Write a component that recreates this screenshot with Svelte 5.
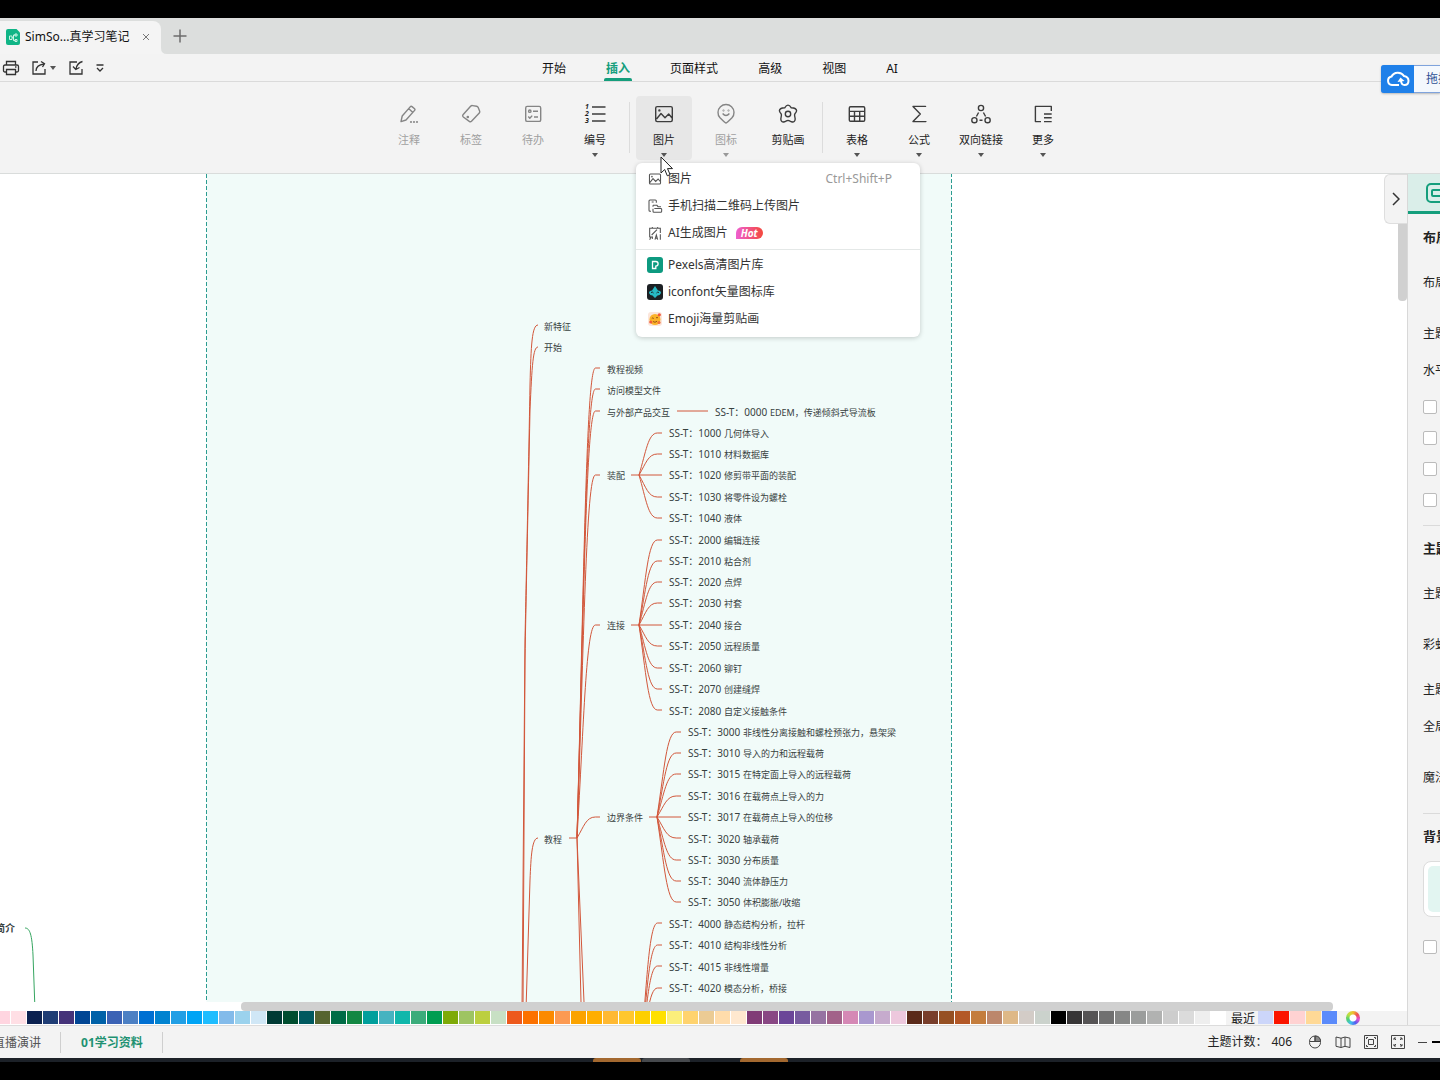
<script>
  const menus = ['开始', '插入', '页面样式', '高级', '视图', 'AI'];

  const dot = (x, y, r) => `M${x - r} ${y}a${r} ${r} 0 1 0 ${2 * r} 0a${r} ${r} 0 1 0 ${-2 * r} 0`;

  const pictureIcon = `M5.2 4.6h13.6q1.5 0 1.5 1.5v12q0 1.5 -1.5 1.5H5.2q-1.5 0 -1.5 -1.5v-12q0 -1.5 1.5 -1.5z M4.5 17L9 11.5l4 4.2 3.7 -3.7 3.8 4.5 ${dot(7.4, 8.4, 0.5)}`;

  const ribbon = [
    { label: '注释', off: true, d: `M4 19.6l1.2 -5.6L13.4 4.6q.8 -.7 1.6 0l2.6 2.2q.8 .8 0 1.6L9 18zM11.6 6.6l4 3.6 ${dot(14, 20, 0.4)} ${dot(17, 20, 0.4)} ${dot(20, 20, 0.4)}` },
    { label: '标签', off: true, d: `M11.6 4.2q.8 -.8 2 -.6l4 .6q1 .2 1.5 1.1l1.600 4q.3 1 -.4 1.800l-7.800 8.200q-1 .9 -2.200 .1l-6 -4.400q-1.200 -1 -.3 -2.300z ${dot(8.8, 15, 0.6)}` },
    { label: '待办', off: true, d: `M6.2 4.4h12q1.5 0 1.5 1.5v12q0 1.5 -1.5 1.5h-12q-1.5 0 -1.5 -1.5v-12q0 -1.5 1.5 -1.5z ${dot(8.8, 9.2, 1.2)} M12 9.2h5 M7.3 14.6l1.5 1.6 2.4 -2.6M13 15h4` },
    { label: '编号', arrow: true, digits: true, d: 'M9 5h13.5M9 12h13.5M9 19h13.5' },
    { divider: true },
    { label: '图片', arrow: true, active: true, d: pictureIcon },
    { label: '图标', off: true, arrow: true, d: `M12 21q-1 -.2 -6 -5.2A8 8 0 1 1 18 15.800q-5 5 -6 5.200z M8.600 11.500q3.400 4 6.800 0 ${dot(9.5, 8.5, 0.3)} ${dot(14.5, 8.5, 0.3)}` },
    { label: '剪贴画', d: `M15.300 5.800Q20.500 6 20.600 8.800Q20.500 10 18.900 11.800Q18.300 12.800 18.700 14L19.200 17Q19 20.700 15.500 19.800L13 18.700Q12 18.300 11 18.700L8.500 19.800Q5 20.700 4.800 17L5.300 14Q5.700 12.800 5.100 11.800Q3.500 10 3.400 8.800Q3.500 6 8.700 5.800Q12 .4 15.300 5.800z ${dot(12, 12, 2.7)}` },
    { divider: true },
    { label: '表格', arrow: true, d: 'M5.500 4.700h13q1.200 0 1.200 1.200v12.200q0 1.200 -1.200 1.200h-13q-1.200 0 -1.200 -1.200v-12.200q0 -1.200 1.200 -1.200zM4.300 9.400h15.400M4.300 14.300h15.400M9.500 9.400v9.900M14.700 9.400v9.900' },
    { label: '公式', arrow: true, d: 'M18.500 5V4.400H6l7.300 7.600L6 19.600h12.800v-.6' },
    { label: '双向链接', arrow: true, d: `${dot(12, 6, 2.6)} ${dot(5.4, 18.2, 2.6)} ${dot(18.6, 18.2, 2.6)} M9.600 10.500l-2.200 4M14.400 10.500l2.200 4M10.500 18.200h3` },
    { label: '更多', arrow: true, d: 'M20.300 9V4.400H4.400v15.200H10M13 12h7.700M13 15.800h7.700M13 19.600h7.700' }
  ];

  const topics = [
    { x: 544, y: 327, text: '新特征' },
    { x: 544, y: 348, text: '开始' },
    { x: 544, y: 840, text: '教程' },
    { x: 607, y: 370, text: '教程视频' },
    { x: 607, y: 391, text: '访问模型文件' },
    { x: 607, y: 413, text: '与外部产品交互' },
    { x: 607, y: 476, text: '装配' },
    { x: 607, y: 626, text: '连接' },
    { x: 607, y: 818, text: '边界条件' }
  ];

  const leaves = [
    { x: 715, y: 413, code: '0000', text: 'EDEM，传递倾斜式导流板' },
    { x: 669, y: 434, code: '1000', text: '几何体导入' },
    { x: 669, y: 455, code: '1010', text: '材料数据库' },
    { x: 669, y: 476, code: '1020', text: '修剪带平面的装配' },
    { x: 669, y: 498, code: '1030', text: '将零件设为螺栓' },
    { x: 669, y: 519, code: '1040', text: '液体' },
    { x: 669, y: 541, code: '2000', text: '编辑连接' },
    { x: 669, y: 562, code: '2010', text: '粘合剂' },
    { x: 669, y: 583, code: '2020', text: '点焊' },
    { x: 669, y: 604, code: '2030', text: '衬套' },
    { x: 669, y: 626, code: '2040', text: '接合' },
    { x: 669, y: 647, code: '2050', text: '远程质量' },
    { x: 669, y: 669, code: '2060', text: '铆钉' },
    { x: 669, y: 690, code: '2070', text: '创建缝焊' },
    { x: 669, y: 712, code: '2080', text: '自定义接触条件' },
    { x: 688, y: 733, code: '3000', text: '非线性分离接触和螺栓预张力，悬架梁' },
    { x: 688, y: 754, code: '3010', text: '导入的力和远程载荷' },
    { x: 688, y: 775, code: '3015', text: '在特定面上导入的远程载荷' },
    { x: 688, y: 797, code: '3016', text: '在载荷点上导入的力' },
    { x: 688, y: 818, code: '3017', text: '在载荷点上导入的位移' },
    { x: 688, y: 840, code: '3020', text: '轴承载荷' },
    { x: 688, y: 861, code: '3030', text: '分布质量' },
    { x: 688, y: 882, code: '3040', text: '流体静压力' },
    { x: 688, y: 903, code: '3050', text: '体积膨胀/收缩' },
    { x: 669, y: 925, code: '4000', text: '静态结构分析，拉杆' },
    { x: 669, y: 946, code: '4010', text: '结构非线性分析' },
    { x: 669, y: 968, code: '4015', text: '非线性增量' },
    { x: 669, y: 989, code: '4020', text: '模态分析，桥接' }
  ];

  // One curve per child: leaves the parent steeply, then bends flat into the label.
  function branch(ox, oy, tx, ty) {
    const w = tx - ox;
    const dy = ty - oy;
    if (dy === 0) return `M${ox} ${oy}H${tx}`;
    return `M${ox} ${oy}C${ox + w * 0.3} ${oy + dy * 0.55} ${ox + w * 0.4} ${ty} ${ox + w * 0.8} ${ty}H${tx}`;
  }

  const fan = (ox, oy, tx, ys) => ys.map((y) => branch(ox, oy, tx, y));

  const lines = [
    ...fan(577, 838, 600, [368, 389, 411, 475, 625, 817]),
    ...fan(639, 475, 662, [433, 454, 475, 497, 518]),
    ...fan(639, 625, 662, [540, 561, 582, 603, 625, 646, 668, 689, 710]),
    ...fan(657, 817, 681, [732, 753, 774, 796, 817, 838, 860, 881, 902]),
    ...fan(640, 1064, 662, [923, 945, 966, 988]),
    'M569 838H577L584 1002',
    'M577 838L581 1002',
    'M631 475H639',
    'M631 625H639',
    'M649 817H657',
    'M677 411H708',
    'M538 325C532 325 531 345 530 385C528 500 526 590 525 640L522 1010',
    'M538 347C533 347 532 365 530 410C528 510 526 600 525 660L523 1010',
    'M538 838C532 838 531 856 530 880L526 1010'
  ];

  const swatches = (
    'ffd5e0 ffdfe5 0b2150 1f3d75 453379 014694 0061a8 3b62b5 4c80c4 0070d2 0183d0 219fe5 00a4f5 1fbdff 83bbea 9bd2ed d0e7f6 ' +
    '003a34 004d2f 00595f 56642f 006c46 138743 009f9c 46b3c0 10b7ab 3bac7b 009d51 7eaa07 9ec462 bccf3f c8e0c4 ' +
    'ed591c fc7100 fb8a00 fc9a52 fba300 ffae00 ffb932 ffc72d fdcf00 ffe000 fbee7b ffd36e ebcb94 ffdcab ffe8cf ' +
    '803b76 894784 6b4698 775b9f 9672a2 a26289 d588b5 a998cf c6abcd edc8dd ' +
    '5a2a19 793e2b 965023 b35827 c47d3d bc876c deb887 d3ccc7 cbd2cc ' +
    '000000 373536 565455 707070 868786 9b9d9c b1b2b1 cdcdcd dbdbdb eeeeee ffffff'
  ).split(' ');
  const recent = ['ccd6fa', 'fb1500', 'ffd2d2', 'ffd996', '5b8bfb'];
</script>

<div class="screen">
  <div class="letterbox"></div>

  <header class="tabstrip">
    <div class="doc-tab">
      <svg class="doc-icon" width="14" height="16" viewBox="0 0 14 16" aria-hidden="true">
        <path d="M2 0h8.500L14 3.500V14q0 2 -2 2H2Q0 16 0 14V2Q0 0 2 0z" fill="#10b586" />
        <path d="M3.500 7h2.500v3.500H3.500zM6 8.700h1.500M9.500 6H7.500v5.500h2M9 5h2v2H9zM9 10.500h2v2H9z" fill="none" stroke="#c8f5e4" stroke-width="1" />
      </svg>
      <span>SimSo...真学习笔记</span>
      <button class="close" aria-label="关闭标签">
        <svg width="8" height="8" viewBox="0 0 8 8"><path d="M1 1l6 6M7 1L1 7" fill="none" stroke="#777" /></svg>
      </button>
      <svg class="flare" width="6" height="6" viewBox="0 0 6 6" aria-hidden="true"><path d="M0 0Q0 6 6 6H0z" fill="#f4f4f4" /></svg>
    </div>
    <button class="new-tab" aria-label="新建标签">
      <svg width="14" height="14" viewBox="0 0 14 14"><path d="M7 .5v13M.5 7h13" fill="none" stroke="#6c6c6c" stroke-width="1.500" /></svg>
    </button>
  </header>

  <nav class="menubar">
    <div class="quick">
      <button aria-label="打印">
        <svg width="18" height="16" viewBox="0 0 18 16"><path d="M4.500 5V1.500h9V5M4.500 12H3q-1.500 0 -1.500 -1.500v-4Q1.500 5 3 5h12q1.500 0 1.500 1.500v4q0 1.500 -1.500 1.500h-1.500M4.500 9.500h9v5h-9zM13 7h1.500" /></svg>
      </button>
      <button class="export" aria-label="导出">
        <svg width="16" height="16" viewBox="0 0 16 16"><path d="M7 2H2v12h12V9M5 11q0 -6 8 -7M10 1.500l3.500 2.300L11.500 7" /></svg>
        <i class="caret"></i>
      </button>
      <button class="import" aria-label="导入">
        <svg width="16" height="16" viewBox="0 0 16 16"><path d="M9 2H2v12h12V9M14.500 1.500Q9 3 8 9M5 6.500L7.800 9.500 11.500 7.500" /></svg>
      </button>
      <button class="more" aria-label="自定义工具栏">
        <svg width="8" height="8" viewBox="0 0 8 8"><path d="M.5 1h7M1 4l3 3 3 -3" /></svg>
      </button>
    </div>
    <ul class="menus">
      {#each menus as menu}
        <li><button class:current={menu === '插入'}>{menu}</button></li>
      {/each}
    </ul>
    <div></div>
    <button class="upload">
      <span class="cloud">
        <svg width="24" height="18" viewBox="0 0 24 18" aria-hidden="true">
          <path d="M13 15H6a4.300 4.300 0 0 1 -.5 -8.500A7 6.500 0 0 1 18 6q4.500 .8 4.500 4.800 0 4.200 -4 4.200 -3 0 -3.500 -4" fill="none" stroke="#fff" stroke-width="2" />
          <path d="M11.500 12l3 -4.500 4 3.500z" fill="#fff" />
        </svg>
      </span>
      <span class="upload-text">拖拽上传</span>
    </button>
  </nav>

  <section class="ribbon">
    {#each ribbon as item}
      {#if item.divider}
        <span class="divider"></span>
      {:else}
        <div class="slot">
          <button class="tool" class:off={item.off} class:active={item.active}>
            <svg width="24" height="24" viewBox="0 0 24 24" aria-hidden="true">
              <path d={item.d} />
              {#if item.digits}
                <text x="2" y="7">1</text><text x="2" y="14">2</text><text x="2" y="21">3</text>
              {/if}
            </svg>
            <span>{item.label}</span>
            {#if item.arrow}<i class="caret"></i>{/if}
          </button>
          {#if item.active}
            <div class="popup">
              <button>
                <svg class="line" width="16" height="16" viewBox="0 0 24 24"><path d={pictureIcon} /></svg>
                图片<kbd>Ctrl+Shift+P</kbd>
              </button>
              <button>
                <svg class="line" width="16" height="16" viewBox="0 0 24 24"><path d="M6 20H4.500q-1.500 0 -1.500 -1.500v-14Q3 3 4.500 3h8Q14 3 14 4.500V7M7 6h3M9 11h6l1.500 2H21M9 11v2M9 16v4q0 1.500 1.500 1.500h10Q22 21.500 22 20v-3q0 -1.200 -1.500 -1.200H11" /></svg>
                手机扫描二维码上传图片
              </button>
              <button>
                <svg class="line" width="16" height="16" viewBox="0 0 24 24"><path d="M9 18H4V5h16v7M8 5V3M16 5V3M7 15L15 7M6 18l-2 4M8 18v3M12 22l2 -7 2 7M13 20h2M20 14v8" /></svg>
                AI生成图片<em>Hot</em>
              </button>
              <hr />
              <button>
                <svg width="16" height="16" viewBox="0 0 16 16"><rect width="16" height="16" rx="3" fill="#0d9a80" /><path d="M5.500 4.500h3.300a2.300 2.300 0 0 1 0 4.600V11.500H5.500z" fill="none" stroke="#fff" stroke-width="1.300" /></svg>
                Pexels高清图片库
              </button>
              <button>
                <svg width="16" height="16" viewBox="0 0 16 16"><rect width="16" height="16" rx="3" fill="#1c2024" /><path d="M8 2l3 4.500q3 0 3 2.500 -1 2.500 -3.500 2.500L8 14l-2.500 -2.500Q3 11.500 2 9q0 -2.500 3 -2.500z" fill="#27b9c4" /><path d="M4 8.500q1.500 -1 2.500 .5M9.500 9q1 -1.500 2.500 -.5" fill="none" stroke="#1c2024" /></svg>
                iconfont矢量图标库
              </button>
              <button>
                <svg width="16" height="16" viewBox="0 0 16 16"><rect x="1" y="1" width="14" height="14" rx="3" fill="#fbe6dc" /><circle cx="8" cy="8.500" r="5.500" fill="#fbb328" /><path d="M4.800 7.500q1 -1.300 2 0M9 7q1 -1.300 2 0M6 10.500q2 1.800 4 -.3" fill="none" stroke="#7b3a12" stroke-width=".8" /><circle cx="3.800" cy="11" r="1.600" fill="#f2593c" /><circle cx="12.300" cy="3.800" r="1.600" fill="#f2593c" /><circle cx="12" cy="11.500" r="1.600" fill="#f0703c" /></svg>
                Emoji海量剪贴画
              </button>
            </div>
            <svg class="pointer" width="14" height="22" viewBox="0 0 14 22" aria-hidden="true"><path d="M1 1v16l3.700 -3.500 2.600 6.300 2.800 -1.200 -2.600 -6H12.500z" fill="#fff" stroke="#222" /></svg>
          {/if}
        </div>
      {/if}
    {/each}
  </section>

  <main class="work">
    <div class="stage">
      <div class="view">
        <svg class="map" role="img" aria-label="思维导图">
          <g transform="translate(0 -174)">
            <rect class="sheet" x="206.500" y="120" width="745" height="1600" />
            {#each lines as d}<path class="branch" {d} />{/each}
            {#each topics as node}<text x={node.x} y={node.y + 3}>{node.text}</text>{/each}
            {#each leaves as leaf}
              <text x={leaf.x} y={leaf.y + 3}><tspan class="code">SS-T：{leaf.code}</tspan><tspan x={leaf.x + 55}>{leaf.text}</tspan></text>
            {/each}
            <path class="green" d="M25 928C30 928 32 935 33 955L35 1010" />
            <text class="strong" x="-5" y="932">简介</text>
          </g>
        </svg>
        <div class="vbar"><i></i></div>
        <button class="collapse" aria-label="收起面板">
          <svg width="8" height="14" viewBox="0 0 8 14"><path d="M1 1l6 6 -6 6" fill="none" stroke="#333" stroke-width="1.500" /></svg>
        </button>
      </div>
      <div class="hbar"><i></i></div>
      <div class="palette">
        <div class="colors">
          {#each swatches as c}<button aria-label={'#' + c} style:background={'#' + c}></button>{/each}
        </div>
        <span>最近</span>
        <div class="colors clear">
          {#each recent as c}<button aria-label={'#' + c} style:background={'#' + c}></button>{/each}
        </div>
        <button class="wheel" aria-label="更多颜色"></button>
      </div>
    </div>

    <aside class="panel">
      <button class="panel-tab" aria-label="布局">
        <svg width="28" height="22" viewBox="0 0 28 22"><rect x="1" y="2" width="26" height="18" rx="4" /><rect x="6" y="8" width="14" height="6" rx="1" /></svg>
      </button>
      <div class="panel-body">
        <h2>布局</h2>
        <p class="mid">布局</p>
        <p class="wide">主题</p>
        <p class="snug">水平</p>
        <label class="snug"><input type="checkbox" aria-label="自由分布" /></label>
        <label class="tight"><input type="checkbox" aria-label="灵活自由主题" /></label>
        <label class="tight"><input type="checkbox" aria-label="主题可重叠" /></label>
        <label class="tight"><input type="checkbox" aria-label="同级对齐" /></label>
        <hr class="near" />
        <h2>主题</h2>
        <p class="mid">主题</p>
        <p class="wide">彩虹</p>
        <p class="mid">主题</p>
        <p class="snug">全局</p>
        <p class="wide">魔法</p>
        <hr />
        <h2>背景</h2>
        <button class="background" aria-label="背景颜色"><i></i></button>
        <label class="last"><input type="checkbox" aria-label="水印" /></label>
      </div>
    </aside>
  </main>

  <footer class="status">
    <div class="sheets">
      <button class="cut">直播演讲</button>
      <button class="chosen">01学习资料</button>
    </div>
    <div class="tools">
      <span>主题计数：</span><span class="count">406</span>
      <button aria-label="鼠标模式"><svg width="14" height="16" viewBox="0 0 14 16"><rect x="1.500" y="2" width="11" height="12" rx="5.500" /><path class="key" d="M7 2q5.500 0 5.500 5.500H7z" /><path d="M1.500 7.500h11M7 2v5.500" /></svg></button>
      <button aria-label="导航"><svg width="16" height="16" viewBox="0 0 16 16"><path d="M1 3l5 1.200 4 -1.200 5 1.200V13.500L10 12.300 6 13.500 1 12.300zM6 4v9.500M10 3v9.300" /></svg></button>
      <button aria-label="适应窗口"><svg width="14" height="14" viewBox="0 0 14 14"><path d="M.5 .5h13v13H.5zM4.500 4.500h5v5h-5zM2.500 4V2.500H4M10 2.500h1.500V4M2.500 10v1.500H4M10 11.500h1.500V10" /></svg></button>
      <button aria-label="全屏"><svg width="14" height="14" viewBox="0 0 14 14"><path d="M.5 .5h13v13H.5zM3 5V3h2M3 3l2 2M9 3h2v2M11 3L9 5M3 9v2h2M3 11l2 -2M9 11h2V9M11 11L9 9" /></svg></button>
      <button class="minus" aria-label="缩小"></button>
      <i class="track"></i>
    </div>
  </footer>

  <div class="desktop"><i></i><i class="grey"></i><i class="apart"></i></div>
  <div class="letterbox"></div>
</div>

<style>
  :global(body) {
    margin: 0;
  }
  .screen {
    display: flex;
    flex-direction: column;
    height: 100vh;
    overflow: hidden;
    background: #f3f3f3;
    color: #222;
    font: 12px/16px 'Noto Sans', 'Noto Sans CJK SC', sans-serif;
  }
  .screen > * {
    flex: none;
  }
  .screen > .work {
    flex: 1;
  }
  button {
    font: inherit;
    color: inherit;
    background: none;
    border: 0;
    padding: 0;
    margin: 0;
    white-space: nowrap;
  }
  svg {
    display: block;
    flex: none;
  }
  .letterbox {
    height: 18px;
    background: #000;
  }
  .caret {
    display: block;
    border: 3px solid transparent;
    border-top: 4px solid #555;
    border-bottom: 0;
  }

  .tabstrip {
    display: flex;
    align-items: flex-end;
    height: 36px;
    background: #dcdedd;
  }
  .doc-tab {
    position: relative;
    display: flex;
    align-items: center;
    box-sizing: border-box;
    height: 33px;
    padding: 0 11px 2px 6px;
    border-radius: 0 8px 0 0;
    background: #f4f4f4;
    color: #111;
  }
  .doc-icon {
    margin-right: 5px;
  }
  .close {
    margin-left: 13px;
  }
  .flare {
    position: absolute;
    left: 100%;
    bottom: 0;
  }
  .new-tab {
    padding: 11px 12px;
  }

  .menubar {
    position: relative;
    display: grid;
    grid-template-columns: 1fr auto 1fr;
    height: 27px;
    border-bottom: 1px solid #dadada;
  }
  .quick {
    display: flex;
    align-items: center;
    padding-left: 2px;
  }
  .quick path {
    fill: none;
    stroke: #333;
    stroke-width: 1.3;
  }
  .export {
    display: flex;
    align-items: center;
    gap: 3px;
    margin-left: 11px;
  }
  .import,
  .more {
    margin-left: 12px;
  }
  .menus {
    display: flex;
    gap: 40px;
    margin: 0;
    padding: 0;
    list-style: none;
    color: #111;
  }
  .menus li,
  .menus button {
    height: 100%;
  }
  .menus button {
    position: relative;
    padding-top: 2px;
  }
  .menus .current {
    color: #149e7c;
    font-weight: bold;
  }
  .current::after {
    content: '';
    position: absolute;
    left: -2px;
    right: -2px;
    bottom: 0;
    height: 3px;
    border-radius: 2px 2px 0 0;
    background: #149e7c;
  }
  .upload {
    position: absolute;
    z-index: 2;
    top: 11px;
    right: 0;
    display: flex;
    width: 59px;
    height: 28px;
    overflow: hidden;
    border-radius: 3px 0 0 3px;
    background: #f4f8fd;
    box-shadow: inset 2px 1px 0 #7fa3dc, inset 0 -1px 0 #7fa3dc, 0 1px 2px #8888;
    color: #2d4f94;
  }
  .cloud {
    display: grid;
    flex: none;
    place-items: center;
    width: 33px;
    height: 28px;
    background: #1f80e9;
  }
  .upload-text {
    padding-left: 12px;
    line-height: 28px;
  }

  .ribbon {
    position: relative;
    z-index: 1;
    display: flex;
    justify-content: center;
    gap: 6px;
    padding: 14px 0 13px 12px;
    border-bottom: 1px solid #d9dcdb;
  }
  .divider {
    width: 1px;
    margin: 6px 0 7px;
    background: #dcdcdc;
  }
  .slot {
    position: relative;
  }
  .tool {
    display: flex;
    flex-direction: column;
    align-items: center;
    width: 56px;
    height: 64px;
    padding-top: 6px;
    border-radius: 4px;
    font-size: 11px;
  }
  .tool.active {
    background: #e7e7e7;
  }
  .tool span {
    margin-top: 6px;
  }
  .tool .caret {
    margin-top: 5px;
  }
  .tool path {
    fill: none;
    stroke: #3c3c3c;
    stroke-width: 1.4;
    stroke-linejoin: round;
  }
  .tool text {
    fill: #222;
    font-size: 7px;
    font-weight: bold;
    font-style: italic;
  }
  .off {
    color: #a0a0a0;
  }
  .off path {
    stroke: #858585;
  }
  .off .caret {
    border-top-color: #999;
  }

  .popup {
    position: absolute;
    z-index: 3;
    top: 67px;
    left: 0;
    width: 284px;
    padding: 2px 0 5px;
    border-radius: 6px;
    background: #fff;
    box-shadow: 0 1px 5px #0003;
    color: #333;
  }
  .popup button {
    display: flex;
    align-items: center;
    gap: 5px;
    width: 100%;
    height: 27px;
    padding: 0 28px 0 11px;
    text-align: left;
  }
  .popup hr {
    height: 1px;
    margin: 3px 0 1px;
    border: 0;
    background: #e4e8e7;
  }
  .popup .line path {
    fill: none;
    stroke: #555;
    stroke-width: 1.6;
  }
  .popup kbd {
    margin-left: auto;
    font: inherit;
    color: #999;
  }
  .popup em {
    margin-left: 3px;
    padding: 0 5px;
    border-radius: 7px 7px 7px 0;
    background: linear-gradient(90deg, #ee5fd0, #f4483c);
    color: #fff;
    font-size: 10px;
    font-weight: bold;
    line-height: 12px;
  }
  .pointer {
    position: absolute;
    z-index: 4;
    top: 60px;
    left: 24px;
  }

  .work {
    display: flex;
    min-height: 0;
  }
  .stage {
    display: flex;
    flex: 1;
    flex-direction: column;
    min-width: 0;
    background: #fff;
  }
  .view {
    position: relative;
    display: flex;
    flex: 1;
    min-height: 0;
  }
  .map {
    flex: 1;
    min-width: 0;
    height: 100%;
    overflow: hidden;
  }
  .sheet {
    fill: #f1fbf9;
    stroke: #2c9c91;
    stroke-dasharray: 4 2;
  }
  .branch,
  .green {
    fill: none;
    stroke: #d2573b;
    stroke-width: 1;
  }
  .green {
    stroke: #35a560;
  }
  .map text {
    fill: #38413f;
    font-size: 9px;
  }
  .map .code {
    font-size: 10px;
  }
  .map .strong {
    font-weight: bold;
    font-size: 10px;
  }
  .vbar {
    flex: none;
    width: 9px;
    padding-top: 50px;
  }
  .vbar i {
    display: block;
    height: 77px;
    border-radius: 0 0 4px 4px;
    background: #d0d0d0;
  }
  .collapse {
    position: absolute;
    top: 0;
    right: 0;
    display: grid;
    place-items: center;
    width: 23px;
    height: 50px;
    border: 1px solid #dedede;
    border-right: 0;
    border-radius: 6px 0 0 6px;
    background: #f3f3f3;
  }
  .hbar {
    padding: 0 74px 0 241px;
  }
  .hbar i {
    display: block;
    height: 9px;
    border-radius: 4px;
    background: #d0d0d0;
  }
  .palette {
    display: flex;
    align-items: center;
    height: 14px;
    overflow: hidden;
    background: #f3f3f3;
  }
  .colors {
    display: flex;
    flex: none;
    gap: 1px;
    margin-left: -5px;
    padding-bottom: 1px;
    background: #fff;
  }
  .colors.clear {
    margin-left: 0;
    background: none;
  }
  .colors button {
    width: 15px;
    height: 13px;
  }
  .palette span {
    padding: 1px 3px 0 5px;
  }
  .wheel {
    width: 14px;
    height: 14px;
    margin-left: 9px;
    border-radius: 50%;
    background: radial-gradient(#fff 0 3px, transparent 4px),
      conic-gradient(#f0c030, #f05050, #e050d0, #5060f0, #40c0f0, #50d070, #c0e040, #f0c030);
  }

  .panel {
    flex: none;
    width: 32px;
    overflow: hidden;
    border-left: 1px solid #d8d8d8;
  }
  .panel-tab {
    display: block;
    width: 100%;
    height: 40px;
    padding: 0 0 0 18px;
    overflow: hidden;
    border-bottom: 3px solid #149e7c;
    background: #daeee9;
  }
  .panel-tab rect {
    fill: none;
    stroke: #149e7c;
    stroke-width: 2;
  }
  .panel-body {
    padding: 13px 0 0 15px;
    line-height: 20px;
    white-space: nowrap;
  }
  .panel h2 {
    margin: 0;
    font-size: 13px;
    line-height: 20px;
  }
  .panel p {
    box-sizing: border-box;
    height: 20px;
    margin: 0;
    padding-top: 1px;
  }
  .panel label {
    display: flex;
    align-items: center;
    height: 20px;
  }
  .panel input {
    appearance: none;
    flex: none;
    box-sizing: border-box;
    width: 14px;
    height: 14px;
    margin: 0;
    border: 1px solid #bbb;
    border-radius: 2px;
    background: #fff;
  }
  .panel .tight {
    margin-top: 11px;
  }
  .panel .snug {
    margin-top: 17px;
  }
  .panel .mid {
    margin-top: 25px;
  }
  .panel .wide {
    margin-top: 31px;
  }
  .panel .last {
    margin-top: 20px;
  }
  .panel hr {
    height: 1px;
    margin: 26px 0 12px;
    border: 0;
    background: #dadada;
  }
  .panel hr.near {
    margin-top: 15px;
  }
  .background {
    display: block;
    width: 80px;
    height: 56px;
    margin-top: 15px;
    padding: 4px;
    border: 1px solid #dcdcdc;
    border-radius: 8px;
    background: #fff;
  }
  .background i {
    display: block;
    height: 100%;
    border-radius: 5px;
    background: #e2f5f1;
  }

  .status {
    display: flex;
    align-items: center;
    justify-content: space-between;
    height: 32px;
    border-top: 1px solid #dcdcdc;
  }
  .sheets {
    display: flex;
    color: #555;
  }
  .sheets button {
    padding: 0 19px 0 20px;
    border-right: 1px solid #cfcfcf;
    line-height: 21px;
  }
  .sheets .cut {
    margin-left: -27px;
  }
  .sheets .chosen {
    color: #1f9272;
    font-weight: bold;
  }
  .tools {
    display: flex;
    align-items: center;
    gap: 13px;
  }
  .tools .count {
    margin-left: -9px;
    margin-right: 3px;
  }
  .tools path,
  .tools rect {
    fill: none;
    stroke: #444;
  }
  .tools .key {
    fill: #888;
  }
  .tools .minus {
    width: 9px;
    height: 1px;
    background: #444;
  }
  .track {
    width: 8px;
    height: 2px;
    margin-left: -8px;
    background: #000;
  }

  .desktop {
    display: flex;
    gap: 1px;
    height: 4px;
    padding-left: 41.2%;
    background: #1c2128;
  }
  .desktop i {
    width: 48px;
    border-radius: 3px 3px 0 0;
    background: #a3682f;
  }
  .desktop .grey {
    background: #46494d;
  }
  .desktop .apart {
    margin-left: 49px;
  }
</style>
